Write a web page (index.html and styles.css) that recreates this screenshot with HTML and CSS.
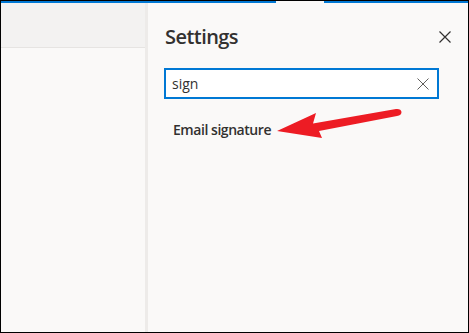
FILE: index.html
```html
<!DOCTYPE html>
<html lang="en">
<head>
    <meta charset="UTF-8">
    <title>Settings</title>
    <link rel="stylesheet" href="styles.css">
</head>
<body>
    <div class="frame">
        <div class="topbar">
            <div class="bar-left"></div>
            <div class="bar-gap"></div>
            <div class="bar-right"></div>
        </div>
        <div class="main">
            <div class="left">
                <div class="left-head"></div>
                <div class="left-body"></div>
            </div>
            <div class="divider"></div>
            <div class="panel">
                <div class="panel-head">
                    <h2 class="title">Settings</h2>
                    <button class="close-btn" aria-label="Close">
                        <svg width="12" height="12" viewBox="0 0 12 12">
                            <path d="M0.5 0.5 L11.5 11.5 M11.5 0.5 L0.5 11.5" stroke="#323130" stroke-width="1.2" fill="none"/>
                        </svg>
                    </button>
                </div>
                <div class="search-box">
                    <input type="text" class="search-input" value="sign">
                    <span class="clear-btn">
                        <svg width="12" height="12" viewBox="0 0 12 12">
                            <path d="M0.5 0.5 L11.5 11.5 M11.5 0.5 L0.5 11.5" stroke="#605e5c" stroke-width="1" fill="none"/>
                        </svg>
                    </span>
                </div>
                <a href="#" class="result">Email signature</a>
            </div>
        </div>
        <!-- annotation arrow -->
        <svg class="arrow" width="469" height="333" viewBox="0 0 469 333">
            <path d="M277 131 L316 113 L313 123.5 L396 109 Q401 108.5 401.5 112 Q401.5 115.5 397 116 L319 131 L322 138 Z" fill="#ed1c24"/>
        </svg>
    </div>
</body>
</html>
```
FILE: styles.css
```css
* {
    margin: 0;
    padding: 0;
    box-sizing: border-box;
}
body {
    font-family: 'Open Sans', sans-serif;
    color: #323130;
}
.frame {
    position: relative;
    width: 469px;
    height: 333px;
    border: 1px solid #000;
    display: flex;
    flex-direction: column;
    background: #faf9f8;
}
.topbar {
    display: flex;
    height: 2px;
}
.bar-left {
    width: 275px;
    background: #0078d4;
}
.bar-gap {
    width: 48px;
    background: #faf9f8;
}
.bar-right {
    flex: 1;
    background: #0078d4;
}
.main {
    flex: 1;
    display: flex;
}
.left {
    width: 144px;
    display: flex;
    flex-direction: column;
}
.left-head {
    height: 45px;
    background: #f3f2f1;
    border-bottom: 1px solid #e6e4e2;
}
.left-body {
    flex: 1;
    background: #faf9f8;
}
.divider {
    width: 3px;
    background: #edebe9;
}
.panel {
    flex: 1;
    padding: 20px 17px 0 16px;
}
.panel-head {
    display: flex;
    justify-content: space-between;
    align-items: center;
}
.title {
    font-size: 20px;
    font-weight: 600;
    line-height: 28px;
    padding-left: 1px;
    letter-spacing: -0.55px;
}
.close-btn {
    background: none;
    border: none;
    width: 12px;
    height: 12px;
    display: flex;
}
.search-box {
    margin-top: 17px;
    width: 275px;
    height: 31px;
    border: 2px solid #0078d4;
    background: #fff;
    display: flex;
    align-items: center;
    padding: 0 8px 0 6px;
}
.search-input {
    flex: 1;
    border: none;
    outline: none;
    background: none;
    font-family: 'Open Sans', sans-serif;
    font-size: 14px;
    color: #323130;
}
.clear-btn {
    display: flex;
}
.result {
    display: block;
    margin-top: 21px;
    padding-left: 9px;
    font-size: 14px;
    font-weight: 600;
    line-height: 20px;
    letter-spacing: -0.45px;
    color: #323130;
    text-decoration: none;
}
.arrow {
    position: absolute;
    top: -1px;
    left: -1px;
    pointer-events: none;
}
```
